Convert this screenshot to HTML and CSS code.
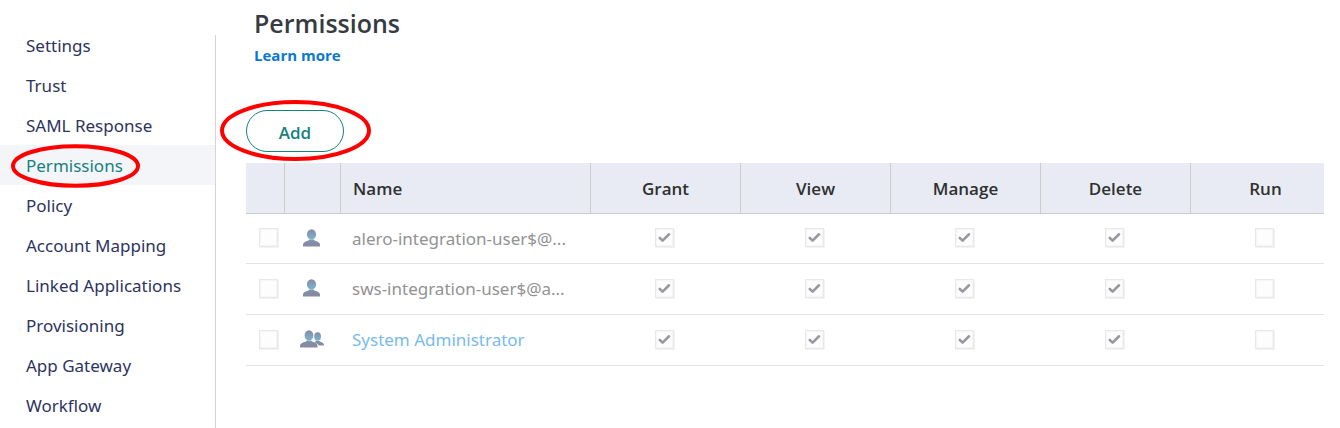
FILE: index.html
```
<!DOCTYPE html>
<html lang="en">
<head>
<meta charset="utf-8">
<title>Permissions</title>
<link rel="stylesheet" href="styles.css">
</head>
<body>
<svg class="defs" aria-hidden="true">
  <defs>
    <linearGradient id="head" x1="0" y1="0" x2="0" y2="1"><stop offset="0" stop-color="#858ba3"/><stop offset="1" stop-color="#7db4d2"/></linearGradient>
    <linearGradient id="torso" x1="0" y1="0" x2="0" y2="1"><stop offset="0" stop-color="#7f9ab4"/><stop offset=".5" stop-color="#858ba3"/></linearGradient>
    <symbol id="user" viewBox="0 0 24 18">
      <ellipse cx="11.500" cy="5.4" rx="4.600" ry="5.2" fill="url(#head)"/>
      <path d="M3 17.500V15.600C3 13.600 5 12.700 8.500 11.600L9.300 10.500H13.700L14.500 11.600C18 12.700 20 13.600 20 15.600V17.500Z" fill="url(#torso)"/>
    </symbol>
    <symbol id="users" viewBox="0 0 24 18">
      <ellipse cx="17.600" cy="6.400" rx="3.400" ry="4.200" fill="url(#head)"/>
      <path d="M14.500 12.200L16.500 10.500H19L19.800 11.500C22.800 12.300 24 13.200 24 15.600H18.800C18.200 14 16.500 13.200 14.500 12.200Z" fill="url(#torso)"/>
      <ellipse cx="9" cy="5.400" rx="4.400" ry="5.200" fill="url(#head)"/>
      <path d="M0 17.500V15.600C0 13.600 2.500 12.700 6 11.600L6.800 10.500H11.200L12 11.600C15.500 12.700 17.500 13.600 17.500 15.600V17.500Z" fill="url(#torso)"/>
    </symbol>
    <symbol id="check" viewBox="0 0 19 19"><path d="M4.800 10L7.600 12.600L14 6.300" fill="none" stroke="#98999e" stroke-width="2.600" stroke-linecap="round" stroke-linejoin="round"/></symbol>
  </defs>
</svg>
<div class="layout">
  <nav class="sidebar" aria-label="Application settings">
    <ul class="menu">
      <li><a class="menu-link" href="#">Settings</a></li>
      <li><a class="menu-link" href="#">Trust</a></li>
      <li><a class="menu-link" href="#">SAML Response</a></li>
      <li><a class="menu-link active" href="#" aria-current="page">Permissions<svg class="ring ring-menu" viewBox="0 0 130 44" aria-hidden="true"><ellipse cx="64.500" cy="22" rx="62.500" ry="19.800" fill="none" stroke="#f00" stroke-width="4"/></svg></a></li>
      <li><a class="menu-link" href="#">Policy</a></li>
      <li><a class="menu-link" href="#">Account Mapping</a></li>
      <li><a class="menu-link" href="#">Linked Applications</a></li>
      <li><a class="menu-link" href="#">Provisioning</a></li>
      <li><a class="menu-link" href="#">App Gateway</a></li>
      <li><a class="menu-link" href="#">Workflow</a></li>
    </ul>
  </nav>
  <main class="content">
    <header class="page-head">
      <h1 class="title">Permissions</h1>
      <a class="learn" href="#">Learn more</a>
    </header>
    <div class="toolbar">
      <button class="add" type="button">Add</button>
      <svg class="ring ring-add" viewBox="0 0 152 62" aria-hidden="true"><ellipse cx="75.500" cy="31.500" rx="73.500" ry="28.500" fill="none" stroke="#f00" stroke-width="4"/></svg>
    </div>
    <div class="table-clip">
      <table class="grid">
        <colgroup><col class="c-select"><col class="c-icon"><col class="c-name"><col class="c-right"><col class="c-right"><col class="c-right"><col class="c-right"><col class="c-right"></colgroup>
        <thead>
          <tr><th aria-label="Select"></th><th aria-label="Type"></th><th class="name">Name</th><th>Grant</th><th>View</th><th>Manage</th><th>Delete</th><th>Run</th></tr>
        </thead>
        <tbody>
          <tr>
            <td class="select"><span class="tick"><input type="checkbox" disabled aria-label="Select alero-integration-user"></span></td>
            <td><svg class="who" aria-hidden="true"><use href="#user"/></svg></td>
            <td class="name">alero-integration-user$@...</td>
            <td><span class="tick"><input type="checkbox" checked disabled aria-label="Grant"><svg aria-hidden="true"><use href="#check"/></svg></span></td>
            <td><span class="tick"><input type="checkbox" checked disabled aria-label="View"><svg aria-hidden="true"><use href="#check"/></svg></span></td>
            <td><span class="tick"><input type="checkbox" checked disabled aria-label="Manage"><svg aria-hidden="true"><use href="#check"/></svg></span></td>
            <td><span class="tick"><input type="checkbox" checked disabled aria-label="Delete"><svg aria-hidden="true"><use href="#check"/></svg></span></td>
            <td><span class="tick"><input type="checkbox" disabled aria-label="Run"></span></td>
          </tr>
          <tr>
            <td class="select"><span class="tick"><input type="checkbox" disabled aria-label="Select sws-integration-user"></span></td>
            <td><svg class="who" aria-hidden="true"><use href="#user"/></svg></td>
            <td class="name">sws-integration-user$@a...</td>
            <td><span class="tick"><input type="checkbox" checked disabled aria-label="Grant"><svg aria-hidden="true"><use href="#check"/></svg></span></td>
            <td><span class="tick"><input type="checkbox" checked disabled aria-label="View"><svg aria-hidden="true"><use href="#check"/></svg></span></td>
            <td><span class="tick"><input type="checkbox" checked disabled aria-label="Manage"><svg aria-hidden="true"><use href="#check"/></svg></span></td>
            <td><span class="tick"><input type="checkbox" checked disabled aria-label="Delete"><svg aria-hidden="true"><use href="#check"/></svg></span></td>
            <td><span class="tick"><input type="checkbox" disabled aria-label="Run"></span></td>
          </tr>
          <tr>
            <td class="select"><span class="tick"><input type="checkbox" disabled aria-label="Select System Administrator"></span></td>
            <td><svg class="who" aria-hidden="true"><use href="#users"/></svg></td>
            <td class="name"><a class="role" href="#">System Administrator</a></td>
            <td><span class="tick"><input type="checkbox" checked disabled aria-label="Grant"><svg aria-hidden="true"><use href="#check"/></svg></span></td>
            <td><span class="tick"><input type="checkbox" checked disabled aria-label="View"><svg aria-hidden="true"><use href="#check"/></svg></span></td>
            <td><span class="tick"><input type="checkbox" checked disabled aria-label="Manage"><svg aria-hidden="true"><use href="#check"/></svg></span></td>
            <td><span class="tick"><input type="checkbox" checked disabled aria-label="Delete"><svg aria-hidden="true"><use href="#check"/></svg></span></td>
            <td><span class="tick"><input type="checkbox" disabled aria-label="Run"></span></td>
          </tr>
        </tbody>
      </table>
    </div>
  </main>
</div>
</body>
</html>
```
FILE: styles.css
```
* { box-sizing: border-box; }
body {
  margin: 0;
  background: #fff;
  color: #2e3038;
  font-family: "Noto Sans", "Open Sans", sans-serif;
  font-size: 17px;
  line-height: 24px;
}
a { text-decoration: none; }
.defs { position: absolute; width: 0; height: 0; }
.layout { display: flex; min-height: 100vh; }

.sidebar {
  flex: 0 0 216px;
  margin-top: 35px;
  border-right: 1px solid #d4d4d4;
}
.menu { list-style: none; margin: -10px 0 0; padding: 0; }
.menu-link {
  display: block;
  position: relative;
  padding: 9px 26px 7px;
  color: #2d3361;
}
.menu-link.active { background: #f4f5f8; color: #16817f; }
.ring { position: absolute; pointer-events: none; }
.ring-menu { left: 11px; top: -1px; width: 130px; height: 44px; }
.ring-add { left: -26px; top: -11px; width: 152px; height: 62px; }

.content { flex: 1; min-width: 0; padding: 6px 16px 0 30px; }
.page-head { padding-left: 8px; }
.title {
  margin: 0;
  color: #363a42;
  font-family: "Open Sans", "Noto Sans", sans-serif;
  font-size: 25px;
  font-weight: 600;
  line-height: 34px;
}
.learn {
  display: block;
  width: max-content;
  color: #0a78d1;
  font-family: "Open Sans", "Noto Sans", sans-serif;
  font-size: 15px;
  font-weight: 700;
  line-height: 30px;
}
.toolbar { position: relative; width: max-content; margin: 40px 0 11px; }
.add {
  display: block;
  width: 98px;
  height: 42px;
  padding: 4px 0 0;
  border: 1px solid #16817f;
  border-radius: 21px;
  background: #fff;
  color: #16817f;
  font: 600 17px/24px "Open Sans", "Noto Sans", sans-serif;
}

.table-clip { overflow: hidden; }
.grid {
  width: 1094px;
  table-layout: fixed;
  border-collapse: separate;
  border-spacing: 0;
}
.c-select { width: 39px; }
.c-icon { width: 56px; }
.c-name { width: 250px; }
.c-right { width: 150px; }
.grid th {
  height: 51px;
  padding: 2px 0 0;
  border-right: 1px solid #ccc;
  border-bottom: 1px solid #ccc;
  background: #e8ebf3;
  color: #303030;
  font-family: "Open Sans", "Noto Sans", sans-serif;
  font-weight: 600;
}
.grid td {
  height: 51px;
  padding: 0 4px 2px 0;
  border-bottom: 1px solid #e3e3e3;
  color: #929292;
  text-align: center;
}
.grid tbody tr:first-child td { height: 50px; }
.grid td:nth-child(2) { padding-right: 2px; }
.grid td.select { padding: 0 2px 2px 8px; }
.grid th.name { padding-left: 12px; text-align: left; }
.grid td.name { padding: 0 0 0 11px; text-align: left; white-space: nowrap; }
.role { color: #78bbed; }
.who { display: block; width: 24px; height: 18px; margin: 0 auto; }
.tick { display: grid; width: 19px; height: 19px; margin: 0 auto; }
.tick > * { grid-area: 1 / 1; width: 19px; height: 19px; margin: 0; pointer-events: none; }
.tick input {
  appearance: none;
  border: 1px solid #e8e8e8;
  background: #fdfdfd;
  box-shadow: 1px 1px 0 #f3f3f3, inset 0 0 1px 1px #f6f6f6;
}
```
